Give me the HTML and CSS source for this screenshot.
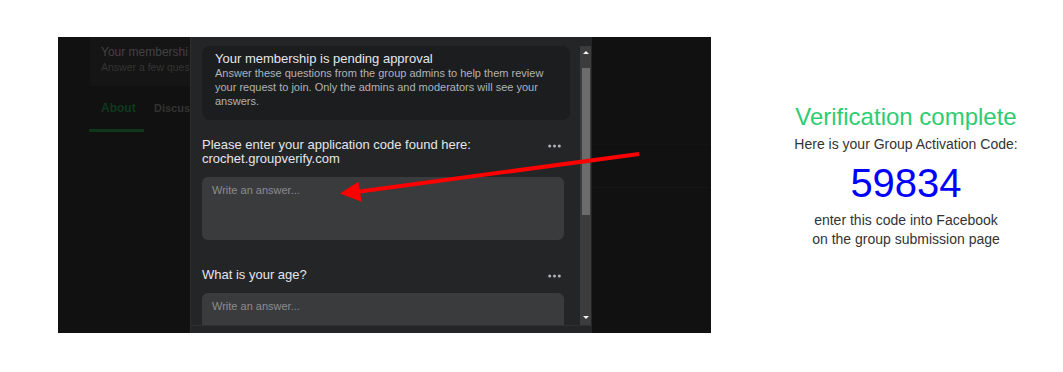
FILE: index.html
```html
<!DOCTYPE html>
<html lang="en">
  <head>
    <meta charset="UTF-8" />
    <meta name="viewport" content="width=device-width, initial-scale=1.0" />
    <title>Group Verification</title>
    <link rel="stylesheet" href="styles.css">
  </head>

  <body>
    <div class="page">
      <div class="shot">
        <!-- the group page behind the dialog: only the strip left of it shows -->
        <div class="behind">
          <div class="behind-card">
            <p class="behind-title">Your membershi</p>
            <p class="behind-sub">Answer a few ques</p>
          </div>
          <div class="behind-tabs">
            <span class="tab active">About</span>
            <span class="tab">Discus</span>
          </div>
          <div class="behind-panel"></div>
        </div>

        <div class="modal">
          <div class="modal-body">
            <div class="modal-content">
              <div class="pending">
                <h4>Your membership is pending approval</h4>
                <p>Answer these questions from the group admins to help them review your request to join. Only the admins and moderators will see your answers.</p>
              </div>

              <div class="question">
                <div class="question-head">
                  <label>Please enter your application code found here:<br />crochet.groupverify.com</label>
                  <svg class="dots" width="13" height="4" viewBox="0 0 13 4">
                    <circle cx="1.7" cy="2" r="1.5" />
                    <circle cx="6.5" cy="2" r="1.5" />
                    <circle cx="11.3" cy="2" r="1.5" />
                  </svg>
                </div>
                <textarea placeholder="Write an answer..."></textarea>
              </div>

              <div class="question">
                <div class="question-head">
                  <label>What is your age?</label>
                  <svg class="dots" width="13" height="4" viewBox="0 0 13 4">
                    <circle cx="1.7" cy="2" r="1.5" />
                    <circle cx="6.5" cy="2" r="1.5" />
                    <circle cx="11.3" cy="2" r="1.5" />
                  </svg>
                </div>
                <textarea placeholder="Write an answer..."></textarea>
              </div>
            </div>

            <div class="scrollbar">
              <div class="scroll-btn"><span class="tri-up"></span></div>
              <div class="thumb"></div>
              <div class="scroll-btn bottom"><span class="tri-down"></span></div>
            </div>
          </div>
          <div class="modal-footer"></div>
        </div>

        <svg class="arrow" width="653" height="296" viewBox="0 0 653 296">
          <line x1="581" y1="117" x2="300" y2="154.8" stroke="#ff0000" stroke-width="4" />
          <polygon points="282,156.5 300.3,144.7 303.7,164.7" fill="#ff0000" />
        </svg>
      </div>

      <div class="result">
        <h1>Verification complete</h1>
        <p class="lead">Here is your Group Activation Code:</p>
        <p class="code">59834</p>
        <p class="hint">enter this code into Facebook<br />on the group submission page</p>
      </div>
    </div>
  </body>
</html>
```

FILE: styles.css
```css
html,
body {
  margin: 0;
  padding: 0;
  background: #fff;
  font-family: "Liberation Sans", Arial, sans-serif;
}

p,
h1,
h4 {
  margin: 0;
}

.page {
  display: flex;
  align-items: flex-start;
  padding: 37px 0 0 58px;
}

/* screenshot of the facebook dialog */
.shot {
  position: relative;
  flex-shrink: 0;
  width: 653px;
  height: 296px;
  overflow: hidden;
  background-color: #111111;
}

.behind-card {
  box-sizing: border-box;
  margin-left: 32px;
  width: 100px;
  height: 49px;
  padding: 7px 0 0 11px;
  background-color: #151515;
}
.behind-title {
  font-size: 12px;
  line-height: 16px;
  color: #424242;
  white-space: nowrap;
}
.behind-sub {
  font-size: 10.5px;
  line-height: 14px;
  color: #343434;
  white-space: nowrap;
}

.behind-tabs {
  display: flex;
  margin: 14px 0 0 31px;
}
.behind-tabs .tab {
  box-sizing: border-box;
  height: 32px;
  padding: 0 0 0 10px;
  font-size: 11px;
  font-weight: bold;
  line-height: 16px;
  color: #333333;
  white-space: nowrap;
  border-bottom: 3px solid transparent;
}
.behind-tabs .tab.active {
  width: 55px;
  padding: 0 0 0 12px;
  font-size: 12px;
  color: #0e3a1d;
  border-bottom-color: #0d361b;
}

.behind-panel {
  margin: 12px 0 0 535px;
  height: 42px;
  border-top: 1px solid #141414;
  border-bottom: 1px solid #151515;
}

.modal {
  position: absolute;
  top: 0;
  left: 132px;
  box-sizing: border-box;
  width: 402px;
  height: 296px;
  border-left: 1px solid #2c2d2f;
  background-color: #242526;
  display: flex;
  flex-flow: column;
}

.modal-body {
  display: flex;
  height: 288px;
}

.modal-content {
  flex: 1;
  overflow: hidden;
  padding: 9px 10px 0 11px;
}

.pending {
  padding: 5px 13px 12px;
  border-radius: 8px;
  background-color: #1c1d1f;
}
.pending h4 {
  font-size: 13px;
  font-weight: normal;
  line-height: 15px;
  color: #e4e6eb;
}
.pending p {
  font-size: 11px;
  line-height: 14px;
  color: #b0b3b8;
}

.question {
  margin: 18px 6px 0 0;
}
.question + .question {
  margin-top: 28px;
}

.question-head {
  display: flex;
  justify-content: space-between;
  align-items: flex-start;
}
.question-head label {
  font-size: 13px;
  line-height: 14px;
  color: #e4e6eb;
}
.dots {
  margin: 6px 3px 0 0;
  fill: #b0b3b8;
}

.question textarea {
  display: block;
  box-sizing: border-box;
  width: 100%;
  height: 63px;
  margin: 11px 0 0;
  padding: 7px 10px;
  border: none;
  border-radius: 6px;
  background-color: #3a3b3c;
  font-family: inherit;
  font-size: 11px;
  line-height: 13px;
  color: #e4e6eb;
  resize: none;
}
.question textarea::placeholder {
  color: #8a8d91;
}
.question textarea:focus {
  outline: none;
}

.scrollbar {
  width: 11px;
  margin: 9px 1px 0 0;
  background-color: #3c3c3c;
  display: flex;
  flex-flow: column;
}
.scroll-btn {
  height: 22px;
  display: flex;
  justify-content: center;
  padding-top: 5px;
  box-sizing: border-box;
}
.scroll-btn.bottom {
  margin-top: auto;
  height: 14px;
}
.tri-up,
.tri-down {
  width: 0;
  height: 0;
  border-left: 3px solid transparent;
  border-right: 3px solid transparent;
}
.tri-up {
  border-bottom: 3px solid #f2f2f2;
}
.tri-down {
  border-top: 3px solid #f2f2f2;
}
.thumb {
  margin-left: 2px;
  width: 8px;
  height: 147px;
  background-color: #6c6c6c;
}

.modal-footer {
  flex: 1;
  border-top: 1px solid #2f3032;
  background-color: #242526;
}

.arrow {
  position: absolute;
  top: 0;
  left: 0;
  pointer-events: none;
}

/* verification result */
.result {
  width: 300px;
  margin-left: 45px;
  padding-top: 66px;
  text-align: center;
}
.result h1 {
  font-size: 24px;
  font-weight: normal;
  line-height: 28px;
  color: #2ecc71;
}
.result .lead {
  margin-top: 4px;
  font-size: 14px;
  line-height: 18px;
  color: #333;
}
.result .code {
  margin-top: 7px;
  font-size: 40px;
  line-height: 46px;
  color: #0000ff;
}
.result .hint {
  margin-top: 5px;
  font-size: 14px;
  line-height: 19px;
  color: #333;
}
```
